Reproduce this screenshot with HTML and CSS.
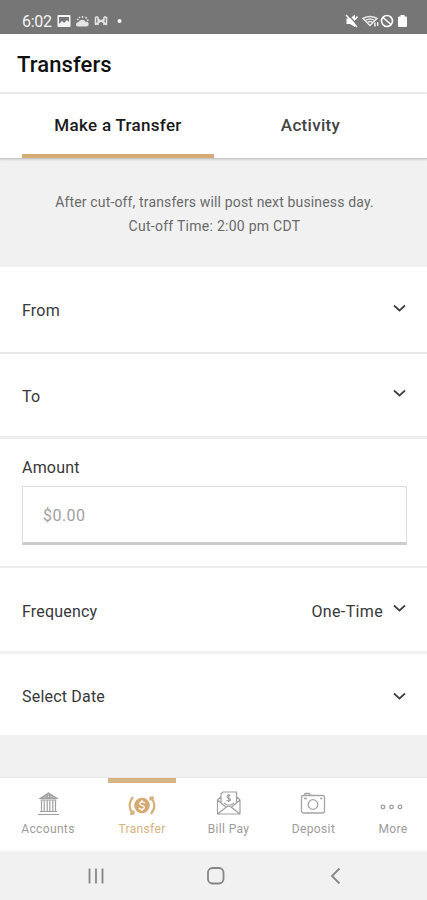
FILE: index.html
```html
<!DOCTYPE html>
<html lang="en">
<head>
<meta charset="utf-8">
<title>Transfers</title>
<link rel="stylesheet" href="styles.css">
</head>
<body>
<div class="status">
  <span class="clock">6:02</span>
  <svg class="status-left" width="68" height="14" viewBox="0 0 68 14">
    <path fill="#f4f4f4" fill-rule="evenodd" d="M1.500 1h11a1 1 0 0 1 1 1v10a1 1 0 0 1-1 1h-11a1 1 0 0 1-1-1V2a1 1 0 0 1 1-1zM2 3v7l3-3 2 2 3-3 2 2V3z"/>
    <path fill="#f4f4f4" d="M2 11l3-3.500 2 2 3-2.500 2 2.500v2z"/>
    <path fill="#e4e4e4" d="M21 12.500a2 2 0 0 1 .3-4.300 4.200 4.200 0 0 1 7.500-.3A2.300 2.300 0 0 1 30 12.500z"/>
    <path stroke="#e4e4e4" stroke-width="1.500" fill="none" d="M20 5l1.500 1M25.500 2v1.800M22 3l1 1M29.500 3l-1 1.500M31.500 6l-1.500.5"/>
    <path stroke="#e4e4e4" stroke-width="1.500" fill="none" d="M38.500 3v8M41 3v3l2 1-2 1v3M49.500 3v8M47 3v3l-2 1 2 1v3M38.500 3H41M47 3h2.500M38.500 11l2-2M49.500 11l-2-2M41 5l6 4M41 9l6-4"/>
    <circle cx="62.500" cy="7" r="2" fill="#fff"/>
  </svg>
  <svg class="status-right" width="64" height="14" viewBox="0 0 64 14">
    <path fill="#fff" d="M1.500 4.500h3.500l5-4v12.500L5 10H1.500z"/>
    <path stroke="#767676" stroke-width="1.300" d="M2.500 0l10.500 11.500"/>
    <path stroke="#fff" stroke-width="1.500" fill="none" d="M1 1l11 12M10 5.500L12.500 2.500"/>
    <path stroke="#e8e8e8" stroke-width="1.500" fill="none" d="M18 4.500Q25 .5 32 4.500L25 11.500zM20.500 6.500Q25 3.500 29.500 6.500M22.500 8.500Q25 6.500 27.500 8.500"/>
    <path stroke="#fff" stroke-width="1.300" d="M30 8.500v4M32.700 8v4"/>
    <circle cx="42" cy="7" r="5.500" fill="none" stroke="#fff" stroke-width="1.600"/>
    <path stroke="#fff" stroke-width="1.600" d="M38 3.500l8 7"/>
    <path fill="#fff" d="M55.500 1h4v1.500h1.500q1 0 1 1V12q0 1-1 1h-7q-1 0-1-1V3.500q0-1 1-1h1.500z"/>
  </svg>
</div>
<header class="header"><h1>Transfers</h1></header>
<nav class="tabs">
  <div class="tab tab-active">Make a Transfer</div>
  <div class="tab">Activity</div>
</nav>
<main class="main">
  <div class="notice"><p class="line-one">After cut-off, transfers will post next business day.</p><p class="line-two">Cut-off Time: 2:00 pm CDT</p></div>
  <div class="row from"><span>From</span><svg class="chevron" width="13" height="9" viewBox="0 0 13 9"><path d="M1 1.500l5.500 5 5.500-5"/></svg></div>
  <div class="row to"><span>To</span><svg class="chevron" width="13" height="9" viewBox="0 0 13 9"><path d="M1 1.500l5.500 5 5.500-5"/></svg></div>
  <div class="amount">
    <label for="amount">Amount</label>
    <input id="amount" type="text" placeholder="$0.00">
  </div>
  <div class="row frequency"><span>Frequency</span><span class="value">One-Time</span><svg class="chevron" width="13" height="9" viewBox="0 0 13 9"><path d="M1 1.500l5.500 5 5.500-5"/></svg></div>
  <div class="row date"><span>Select Date</span><svg class="chevron" width="13" height="9" viewBox="0 0 13 9"><path d="M1 1.500l5.500 5 5.500-5"/></svg></div>
</main>
<nav class="bottom">
  <div class="item">
    <svg width="28" height="28" viewBox="0 0 28 28" fill="none" stroke="#a0a0a0" stroke-width="1.200">
      <path fill="#b5b5b5" fill-rule="evenodd" d="M6 9.500l8.500-5.500 8.500 5.500zM14.500 6a1.200 1.200 0 1 0 .01 0z"/>
      <path d="M6.500 11h16M7.500 11v11M10.200 11v11M13.200 11v11M15.800 11v11M18.800 11v11M21.500 11v11M6 22.500h17M4 25.500h21"/>
    </svg>
    <span>Accounts</span>
  </div>
  <div class="item item-active">
    <svg width="28" height="28" viewBox="0 0 28 28" fill="none" stroke="#d8b07c" stroke-width="2.200">
      <circle cx="14" cy="16.500" r="7.800" fill="#d5aa71" stroke="none"/>
      <path stroke="#fff" stroke-width="1.300" d="M16.800 14q-1.300-1.300-3-1-2.300.4-2 2 .2 1 2.200 1.500 2.800.6 2.300 2.300-.5 1.500-2.300 1.500-2 0-3.300-1.300M14 11v2M14 20v2"/>
      <path d="M5 8Q-1.500 16.500 4.500 24M2 24.700h3.500v-3.200M23 25Q29.500 16.500 23.500 9M26 8.500h-3.500v3"/>
    </svg>
    <span>Transfer</span>
  </div>
  <div class="item">
    <svg width="28" height="28" viewBox="0 0 28 28" fill="none" stroke="#a0a0a0" stroke-width="1.200">
      <path d="M6.500 8L3.500 11v14h22.500V11l-3-3M3.500 11l9 7.500M26 11l-9 7.500M3.500 25l9-7q2.300-1.500 4.500 0l9 7M7 13.500V5l2-2h13.500v10.500"/>
      <path d="M16.500 6.500q-3-1-3.500 1 0 1.300 1.800 1.700 2 .5 1.500 2-1 1.500-3.800.3M14.700 5v8M10 14l3 2h4l3-2"/>
    </svg>
    <span>Bill Pay</span>
  </div>
  <div class="item">
    <svg width="28" height="28" viewBox="0 0 28 28" fill="none" stroke="#a5a5a5" stroke-width="1.300">
      <rect x="2.500" y="6.500" width="23" height="17.500" rx="2"/>
      <path d="M5.500 6.500V5.500q0-1 1-1H10q1 0 1 1v1M5 9.500h3M21 9.500h2.500"/>
      <circle cx="14" cy="15.500" r="4.800"/>
    </svg>
    <span>Deposit</span>
  </div>
  <div class="item">
    <svg width="28" height="28" viewBox="0 0 28 28" fill="none" stroke="#a0a0a0" stroke-width="1.300">
      <circle cx="4" cy="18" r="1.800"/><circle cx="12.500" cy="18" r="1.800"/><circle cx="21" cy="18" r="1.800"/>
    </svg>
    <span>More</span>
  </div>
</nav>
<div class="system">
  <svg width="20" height="18" viewBox="0 0 20 18"><path d="M2.500 1.500v15M9 1.500v15M15.500 1.500v15"/></svg>
  <svg width="20" height="18" viewBox="0 0 20 18"><rect x="1" y="1" width="15.500" height="15.500" rx="4.500"/></svg>
  <svg width="20" height="18" viewBox="0 0 20 18"><path d="M13.500 1.500L6 9l7.500 7.500"/></svg>
</div>
</body>
</html>
```
FILE: styles.css
```css
* { box-sizing: border-box; }
body { margin: 0; width: 427px; height: 900px; overflow: hidden; display: flex; flex-direction: column; background: #f1f1f1; font-family: Roboto, sans-serif; font-size: 16px; letter-spacing: 0.2px; color: #383838; }
h1, p { margin: 0; }
svg { display: block; flex: none; }
.status { height: 34px; flex: none; background: #767676; display: flex; align-items: flex-end; padding: 0 18px 6px 22px; }
.clock { color: #f4f4f4; font-size: 16px; line-height: 12px; width: 35px; letter-spacing: -0.3px; }
.status-right { margin-left: auto; }
.header { height: 60px; flex: none; background: #fff; border-bottom: 2px solid #ebebeb; padding: 3px 17px 0; display: flex; align-items: center; }
h1 { font-size: 22px; font-weight: 500; letter-spacing: 0.1px; color: #111; line-height: 30px; }
.tabs { height: 65px; flex: none; background: #fff; padding: 0 20px 0 22px; display: grid; grid-template-columns: 192px 1fr; border-bottom: 1px solid #c6c6c6; box-shadow: 0 1px 2px #0002; position: relative; }
.tab { display: flex; align-items: center; justify-content: center; font-size: 17px; font-weight: 500; letter-spacing: 0.3px; color: #444; padding-bottom: 2px; }
.tab-active { border-bottom: 4px solid #d6ac75; color: #1a1a1a; padding: 2px 0 0; }
.main { flex: 1; }
.notice { height: 108px; padding: 31px 0 0 2px; text-align: center; font-size: 14px; line-height: 24px; color: #6a6a6a; }
.line-one { letter-spacing: 0.15px; }
.line-two { letter-spacing: 0.27px; }
.row { background: #fff; display: flex; align-items: center; padding: 2px 21px 0 22px; border-bottom: 2px solid #e8e8e8; }
.row .chevron { margin-left: auto; margin-bottom: 5px; }
.row .value { margin-left: auto; letter-spacing: 0.35px; }
.row .value + .chevron { margin-left: 10px; }
.chevron path { fill: none; stroke: #404040; stroke-width: 1.7; }
.from { height: 87px; }
.to { height: 85px; border-bottom: 3px solid #eee; }
.amount { height: 129px; background: #fff; border-bottom: 2px solid #ededed; padding: 19px 20px 0 22px; }
.amount label { display: block; line-height: 20px; height: 28px; }
.amount input { display: block; width: 100%; height: 59px; border: 1px solid #ddd; border-bottom: 3px solid #ccc; padding: 1px 20px 0; font: inherit; letter-spacing: 0.45px; background: #fff; outline: 0; }
.amount input::placeholder { color: #a0a0a0; opacity: 1; }
.frequency { height: 86px; border-bottom: 3px solid #f1f1f1; padding-top: 4px; }
.frequency .chevron { margin-bottom: 7px; }
.date { height: 81px; border: 0; padding-top: 4px; }
.date .chevron { margin-bottom: 1px; }
.bottom { height: 74px; flex: none; background: #fff; border-top: 1px solid #e7e7e7; display: grid; grid-template-columns: 95px 93px 80px 90px 69px; justify-items: center; }
.item { width: 68px; padding-top: 11px; display: flex; flex-direction: column; align-items: center; color: #9c9c9c; font-size: 12px; line-height: 16px; }
.item span { margin-top: 4px; letter-spacing: 0.35px; padding-left: 1px; white-space: nowrap; }
.item-active { border-top: 5px solid #d5b383; padding-top: 6px; color: #d8b07c; }
.system { height: 49px; flex: none; display: flex; align-items: center; justify-content: space-between; padding: 0 81px 0 87px; }
.system svg { fill: none; stroke: #858585; stroke-width: 1.8; }
```
